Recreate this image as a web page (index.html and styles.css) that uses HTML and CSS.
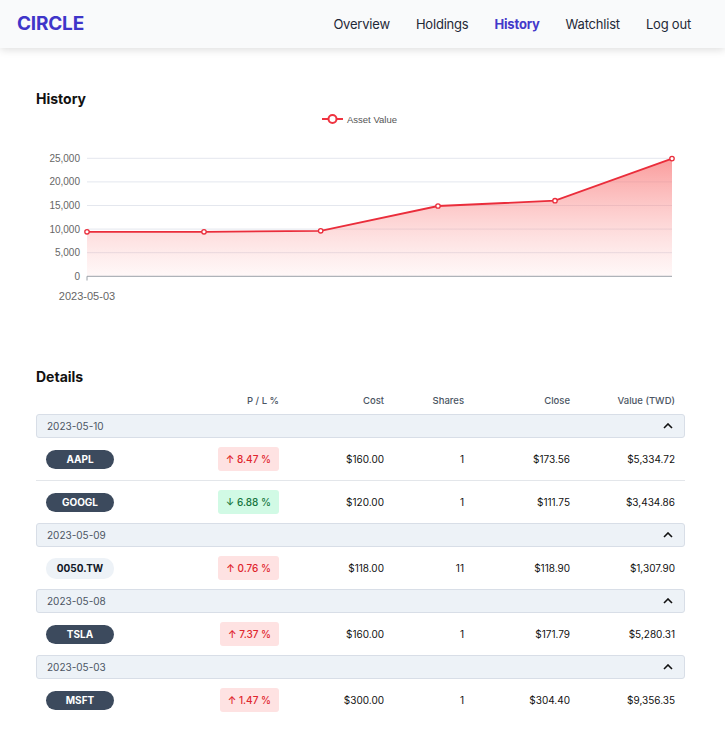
FILE: index.html
```html
<!DOCTYPE html>
<html>
<head>
<meta charset="utf-8">
<link rel="stylesheet" href="styles.css">
</head>
<body>
<header class="nav">
  <div class="brand">CIRCLE</div>
  <nav class="links">
    <a class="link">Overview</a>
    <a class="link">Holdings</a>
    <a class="link active">History</a>
    <a class="link">Watchlist</a>
    <a class="link">Log out</a>
  </nav>
</header>
<main class="main">
  <h2 class="title">History</h2>
  <svg class="chart" width="725" height="200" viewBox="0 0 725 200">
    <defs>
      <linearGradient id="fillg" x1="0" y1="158" x2="0" y2="276" gradientUnits="userSpaceOnUse">
        <stop offset="0" stop-color="#f87171" stop-opacity="0.7"/>
        <stop offset="1" stop-color="#fca5a5" stop-opacity="0.08"/>
      </linearGradient>
    </defs>
    <g transform="translate(0,-109)">
      <line x1="322" y1="119" x2="343" y2="119" stroke="#ef3340" stroke-width="2"/>
      <circle cx="332.5" cy="119" r="4" fill="#fff" stroke="#ef3340" stroke-width="2"/>
      <text x="347" y="122.5" class="legend">Asset Value</text>

      <g class="grid">
        <line x1="87" y1="158.3" x2="672" y2="158.3"/>
        <line x1="87" y1="181.9" x2="672" y2="181.9"/>
        <line x1="87" y1="205.5" x2="672" y2="205.5"/>
        <line x1="87" y1="229.1" x2="672" y2="229.1"/>
        <line x1="87" y1="252.7" x2="672" y2="252.7"/>
      </g>
      <g class="ylab">
        <text x="80" y="161.8">25,000</text>
        <text x="80" y="185.4">20,000</text>
        <text x="80" y="209">15,000</text>
        <text x="80" y="232.6">10,000</text>
        <text x="80" y="256.2">5,000</text>
        <text x="80" y="279.8">0</text>
      </g>
      <path d="M87 231.8 L204 231.8 L320.7 230.8 L438 206 L555 200.7 L672 158.6 L672 276.3 L87 276.3 Z" fill="url(#fillg)"/>
      <line x1="87" y1="276.3" x2="672" y2="276.3" stroke="#9aa0a8" stroke-width="1"/>
      <line x1="87" y1="276.3" x2="87" y2="280.5" stroke="#9aa0a8" stroke-width="1"/>
      <polyline points="87,231.8 204,231.8 320.7,230.8 438,206 555,200.7 672,158.6" fill="none" stroke="#ea2d3b" stroke-width="1.8"/>
      <g fill="#fff" stroke="#ea2d3b" stroke-width="1.3">
        <circle cx="87" cy="231.8" r="2.2"/>
        <circle cx="204" cy="231.8" r="2.2"/>
        <circle cx="320.7" cy="230.8" r="2.2"/>
        <circle cx="438" cy="206" r="2.2"/>
        <circle cx="555" cy="200.7" r="2.2"/>
        <circle cx="672" cy="158.6" r="2.2"/>
      </g>
      <text x="87" y="300" class="xlab">2023-05-03</text>
    </g>
  </svg>

  <h2 class="title details-title">Details</h2>
  <div class="table">
    <div class="row head">
      <div></div>
      <div class="r">P / L %</div>
      <div class="r">Cost</div>
      <div class="r">Shares</div>
      <div class="r">Close</div>
      <div class="r">Value (TWD)</div>
    </div>

    <div class="group">
      <div class="ghead"><span>2023-05-10</span><svg class="chev" width="10" height="6" viewBox="0 0 10 6"><polyline points="1,5 5,1 9,5" fill="none" stroke="#111" stroke-width="1.6"/></svg></div>
      <div class="row item">
        <div><span class="pill">AAPL</span></div>
        <div class="r"><span class="badge up">↑ 8.47 %</span></div>
        <div class="r">$160.00</div>
        <div class="r">1</div>
        <div class="r">$173.56</div>
        <div class="r">$5,334.72</div>
      </div>
      <div class="row item">
        <div><span class="pill">GOOGL</span></div>
        <div class="r"><span class="badge down">↓ 6.88 %</span></div>
        <div class="r">$120.00</div>
        <div class="r">1</div>
        <div class="r">$111.75</div>
        <div class="r">$3,434.86</div>
      </div>
    </div>

    <div class="group">
      <div class="ghead"><span>2023-05-09</span><svg class="chev" width="10" height="6" viewBox="0 0 10 6"><polyline points="1,5 5,1 9,5" fill="none" stroke="#111" stroke-width="1.6"/></svg></div>
      <div class="row item">
        <div><span class="pill light">0050.TW</span></div>
        <div class="r"><span class="badge up">↑ 0.76 %</span></div>
        <div class="r">$118.00</div>
        <div class="r">11</div>
        <div class="r">$118.90</div>
        <div class="r">$1,307.90</div>
      </div>
    </div>

    <div class="group">
      <div class="ghead"><span>2023-05-08</span><svg class="chev" width="10" height="6" viewBox="0 0 10 6"><polyline points="1,5 5,1 9,5" fill="none" stroke="#111" stroke-width="1.6"/></svg></div>
      <div class="row item">
        <div><span class="pill">TSLA</span></div>
        <div class="r"><span class="badge up">↑ 7.37 %</span></div>
        <div class="r">$160.00</div>
        <div class="r">1</div>
        <div class="r">$171.79</div>
        <div class="r">$5,280.31</div>
      </div>
    </div>

    <div class="group">
      <div class="ghead"><span>2023-05-03</span><svg class="chev" width="10" height="6" viewBox="0 0 10 6"><polyline points="1,5 5,1 9,5" fill="none" stroke="#111" stroke-width="1.6"/></svg></div>
      <div class="row item">
        <div><span class="pill">MSFT</span></div>
        <div class="r"><span class="badge up">↑ 1.47 %</span></div>
        <div class="r">$300.00</div>
        <div class="r">1</div>
        <div class="r">$304.40</div>
        <div class="r">$9,356.35</div>
      </div>
    </div>
  </div>
</main>
</body>
</html>
```
FILE: styles.css
```css
* { box-sizing: border-box; }
html, body { margin: 0; padding: 0; background: #fff; }
body {
  font-family: Inter, "Noto Sans", "Liberation Sans", sans-serif;
  color: #111827;
  width: 725px;
  height: 753px;
  overflow: hidden;
}
.nav {
  height: 48px;
  background: #f9fafb;
  box-shadow: 0 2px 8px rgba(0, 0, 0, 0.13);
  display: flex;
  align-items: center;
  justify-content: space-between;
  padding: 0 34px 1px 17px;
  position: relative;
  z-index: 1;
}
.brand {
  font-size: 19px;
  font-weight: 700;
  color: #3f35c9;
  letter-spacing: -0.2px;
}
.links { display: flex; gap: 26px; }
.link {
  font-size: 13px;
  letter-spacing: -0.2px;
  color: #1f2937;
  text-decoration: none;
}
.link.active { color: #4338ca; font-weight: 700; }

.main { padding: 41px 40px 0 36px; }
.title {
  margin: 0;
  font-size: 14px;
  line-height: 20px;
  font-weight: 700;
  color: #111;
}
.chart { display: block; margin-left: -36px; }
.legend { font-size: 9.5px; fill: #555; font-family: "Liberation Sans", Arial, sans-serif; }
.grid line { stroke: #e4e7ee; stroke-width: 1; }
.ylab text { font-size: 10px; fill: #666; text-anchor: end; font-family: "Liberation Sans", Arial, sans-serif; }
.xlab { font-size: 11px; fill: #666; text-anchor: middle; font-family: "Liberation Sans", Arial, sans-serif; }

.details-title { margin-top: 58px; }
.table { margin-top: 3px; }
.row {
  display: grid;
  grid-template-columns: 134px 99px 105px 80px 106px 105px;
  padding: 0 10px;
  align-items: center;
}
.r { text-align: right; }
.head {
  height: 20px;
  font-size: 9.5px;
  font-weight: 500;
  color: #4b5563;
  margin-bottom: 4px;
}
.ghead {
  height: 24px;
  background: #edf2f7;
  border: 1px solid #d8dee7;
  border-radius: 3px;
  display: flex;
  align-items: center;
  justify-content: space-between;
  padding: 0 10px 0 10px;
  font-size: 10px;
  color: #4b5563;
}
.chev { display: block; margin-right: 1px; }
.item {
  height: 42px;
  font-size: 10px;
  color: #111;
}
.item + .item { border-top: 1px solid #e3e6ea; height: 43px; }
.pill {
  display: inline-flex;
  align-items: center;
  justify-content: center;
  width: 68px;
  height: 19px;
  border-radius: 10px;
  background: #3c4a5d;
  color: #fff;
  font-weight: 700;
  font-size: 10px;
}
.pill.light { background: #edf2f7; color: #111827; height: 21px; }
.badge {
  display: inline-block;
  height: 24px;
  line-height: 24px;
  padding: 0 8px;
  border-radius: 3px;
  font-weight: 500;
  font-size: 10px;
}
.badge.up { background: #fee2e2; color: #e0262d; }
.badge.down { background: #d1fae5; color: #17763f; }
```
